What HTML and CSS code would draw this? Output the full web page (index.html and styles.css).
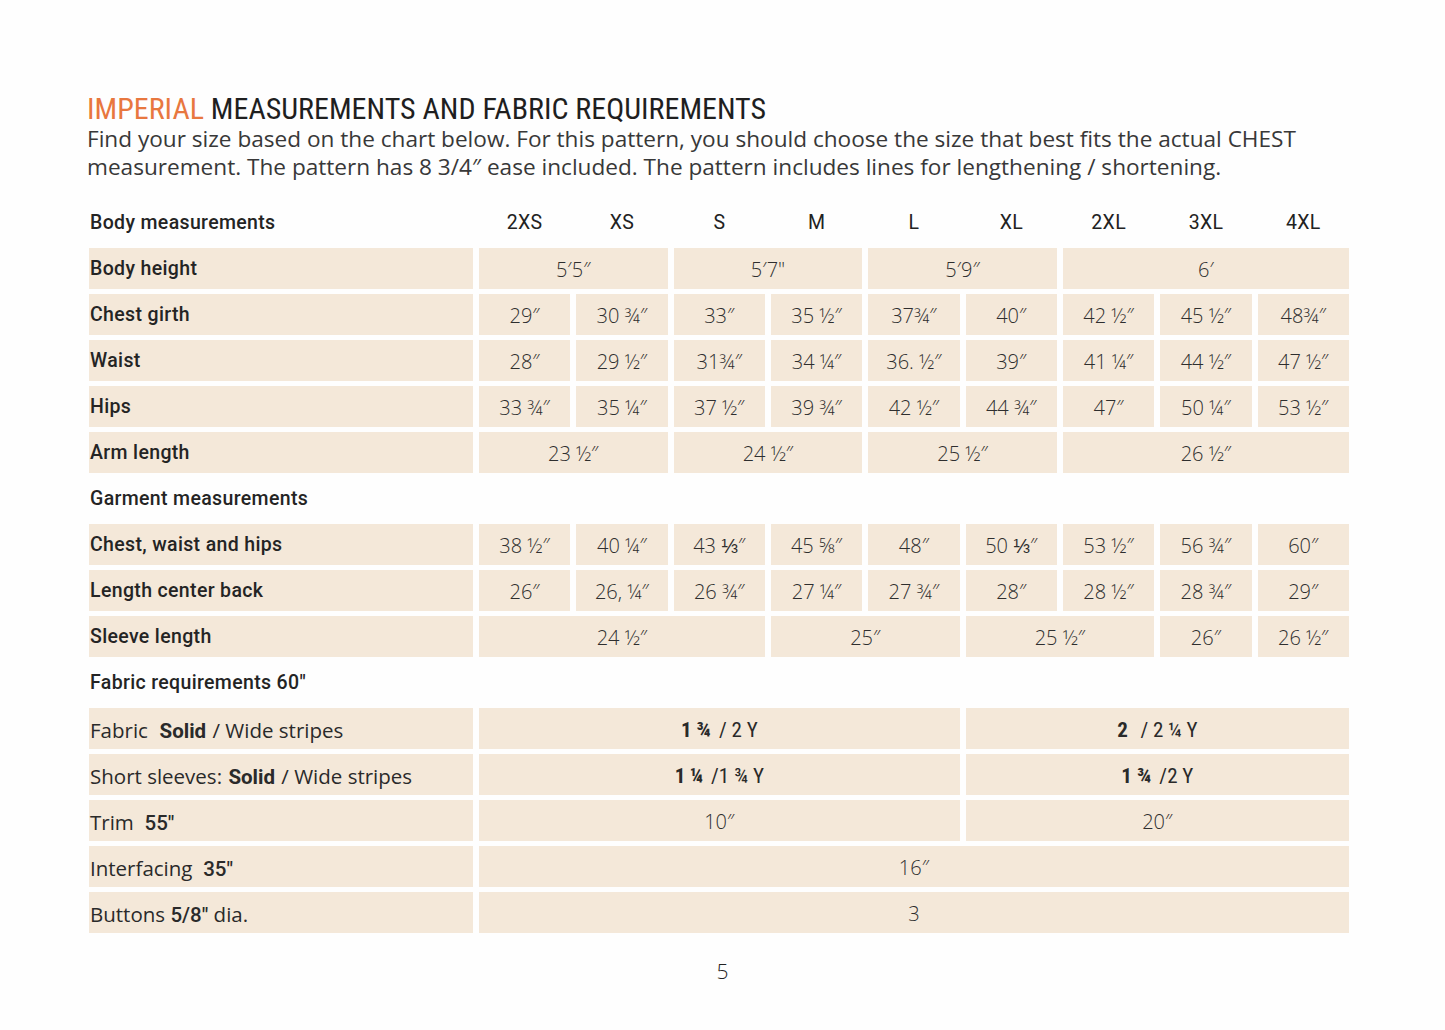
FILE: index.html
```html
<!DOCTYPE html>
<html lang="en">
<head>
<meta charset="utf-8">
<title>Imperial measurements and fabric requirements</title>
<link rel="stylesheet" href="styles.css">
</head>
<body>
<main class="page">
  <header class="intro">
    <h1 class="title"><span class="accent">IMPERIAL</span> MEASUREMENTS AND FABRIC REQUIREMENTS</h1>
    <p class="lead">Find your size based on the chart below. For this pattern, you should choose the size that best fits the actual CHEST measurement. The pattern has 8 3/4″ ease included. The pattern includes lines for lengthening / shortening.</p>
  </header>

  <section class="chart">
    <div class="head label">Body measurements</div>
    <div class="head">2XS</div><div class="head">XS</div><div class="head">S</div><div class="head">M</div><div class="head">L</div><div class="head">XL</div><div class="head">2XL</div><div class="head">3XL</div><div class="head">4XL</div>

    <div class="cell label">Body height</div>
    <div class="cell span2">5′5″</div><div class="cell span2">5′7"</div><div class="cell span2">5′9″</div><div class="cell span3">6′</div>

    <div class="cell label">Chest girth</div>
    <div class="cell">29″</div><div class="cell">30 ¾″</div><div class="cell">33″</div><div class="cell">35 ½″</div><div class="cell">37¾″</div><div class="cell">40″</div><div class="cell">42 ½″</div><div class="cell">45 ½″</div><div class="cell">48¾″</div>

    <div class="cell label">Waist</div>
    <div class="cell">28″</div><div class="cell">29 ½″</div><div class="cell">31¾″</div><div class="cell">34 ¼″</div><div class="cell">36. ½″</div><div class="cell">39″</div><div class="cell">41 ¼″</div><div class="cell">44 ½″</div><div class="cell">47 ½″</div>

    <div class="cell label">Hips</div>
    <div class="cell">33 ¾″</div><div class="cell">35 ¼″</div><div class="cell">37 ½″</div><div class="cell">39 ¾″</div><div class="cell">42 ½″</div><div class="cell">44 ¾″</div><div class="cell">47″</div><div class="cell">50 ¼″</div><div class="cell">53 ½″</div>

    <div class="cell label">Arm length</div>
    <div class="cell span2">23 ½″</div><div class="cell span2">24 ½″</div><div class="cell span2">25 ½″</div><div class="cell span3">26 ½″</div>

    <div class="section label">Garment measurements</div>

    <div class="cell label">Chest, waist and hips</div>
    <div class="cell">38 ½″</div><div class="cell">40 ¼″</div><div class="cell">43 ⅓″</div><div class="cell">45 ⅝″</div><div class="cell">48″</div><div class="cell">50 ⅓″</div><div class="cell">53 ½″</div><div class="cell">56 ¾″</div><div class="cell">60″</div>

    <div class="cell label">Length center back</div>
    <div class="cell">26″</div><div class="cell">26, ¼″</div><div class="cell">26 ¾″</div><div class="cell">27 ¼″</div><div class="cell">27 ¾″</div><div class="cell">28″</div><div class="cell">28 ½″</div><div class="cell">28 ¾″</div><div class="cell">29″</div>

    <div class="cell label">Sleeve length</div>
    <div class="cell span3">24 ½″</div><div class="cell span2">25″</div><div class="cell span2">25 ½″</div><div class="cell">26″</div><div class="cell">26 ½″</div>

    <div class="section label">Fabric requirements 60″</div>

    <div class="cell label light">Fabric&nbsp; <b>Solid</b> / Wide stripes</div>
    <div class="cell span5 narrow"><b>1 ¾</b> / 2 Y</div><div class="cell span4 narrow"><b>2</b>&nbsp; / 2 ¼ Y</div>

    <div class="cell label light">Short sleeves: <b>Solid</b> / Wide stripes</div>
    <div class="cell span5 narrow"><b>1 ¼</b> /1 ¾ Y</div><div class="cell span4 narrow"><b>1 ¾</b> /2 Y</div>

    <div class="cell label light">Trim&nbsp; <b class="mid">55″</b></div>
    <div class="cell span5">10″</div><div class="cell span4">20″</div>

    <div class="cell label light">Interfacing&nbsp; <b class="mid">35″</b></div>
    <div class="cell span9">16″</div>

    <div class="cell label light">Buttons <b class="mid">5/8″</b> dia.</div>
    <div class="cell span9">3</div>
  </section>

  <footer class="folio">5</footer>
</main>
</body>
</html>
```

FILE: styles.css
```css
html, body {
  margin: 0;
  padding: 0;
  background: #fefefe;
}

body {
  font-family: "Open Sans", "Liberation Sans", sans-serif;
  color: #2a2a2a;
}

.page {
  width: 1445px;
  height: 1030px;
  box-sizing: border-box;
  padding: 93px 0 0 87px;
}

.title {
  margin: 0;
  font-family: "Liberation Sans Narrow", "Roboto Condensed", "Roboto", sans-serif;
  font-weight: 400;
  font-size: 30px;
  line-height: 32px;
  color: #1f1f1f;
}

.accent {
  color: #e8773f;
}

.lead {
  margin: 0;
  width: 1240px;
  font-size: 22.6px;
  line-height: 28px;
  font-weight: 400;
  color: #383838;
}

.chart {
  margin: 21px 0 0 2px;
  width: 1260px;
  display: grid;
  grid-template-columns: 384px repeat(9, 1fr);
  grid-auto-rows: 41px;
  column-gap: 6px;
  row-gap: 5px;
  font-size: 20px;
}

.head,
.cell,
.section {
  display: block;
  text-align: center;
  line-height: 38px;
  padding-top: 3px;
  box-sizing: border-box;
  white-space: nowrap;
}

.head {
  font-family: "Roboto", sans-serif;
  font-weight: 400;
  font-size: 19.5px;
  color: #222;
  padding-top: 1px;
  line-height: 40px;
  letter-spacing: 0.3px;
}

.cell {
  background: #f4e8d9;
  font-weight: 300;
  color: #2e2e2e;
}

.label {
  text-align: left;
  padding-left: 1px;
  padding-top: 0;
  line-height: 41px;
  font-family: "Roboto", sans-serif;
  font-weight: 500;
  font-size: 19.5px;
  letter-spacing: 0.35px;
  color: #242424;
}

.label.light {
  font-family: "Open Sans", sans-serif;
  font-weight: 400;
  font-size: 20.5px;
  letter-spacing: 0;
  color: #2a2a2a;
  line-height: 38px;
  padding-top: 3px;
}

.label.light b {
  font-family: "Roboto", sans-serif;
  font-weight: 700;
  margin: 0 0.05em;
}

.label.light b.mid {
  font-weight: 500;
  margin: 0;
}

.section {
  grid-column: 1 / -1;
  height: 42px;
  padding-top: 0;
  line-height: 41px;
}

.span2 { grid-column: span 2; }
.span3 { grid-column: span 3; }
.span4 { grid-column: span 4; }
.span5 { grid-column: span 5; }
.span9 { grid-column: span 9; }

.narrow {
  font-family: "Liberation Sans Narrow", "Roboto Condensed", "Roboto", sans-serif;
  font-weight: 400;
  font-size: 21px;
  color: #2a2a2a;
}

.narrow b {
  font-weight: 700;
  margin-right: 3px;
}

.folio {
  margin: 24px 0 0 -87px;
  width: 1445px;
  text-align: center;
  font-size: 21px;
  font-weight: 300;
  color: #222;
}
```
